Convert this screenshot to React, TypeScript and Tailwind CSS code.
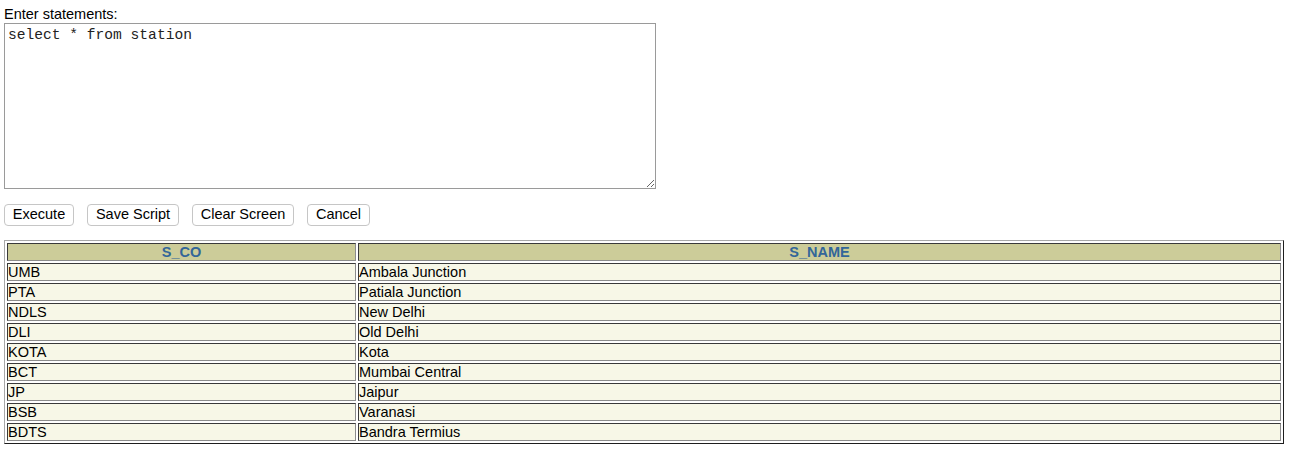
import React from "react";

const rows: [string, string][] = [
  ["UMB", "Ambala Junction"],
  ["PTA", "Patiala Junction"],
  ["NDLS", "New Delhi"],
  ["DLI", "Old Delhi"],
  ["KOTA", "Kota"],
  ["BCT", "Mumbai Central"],
  ["JP", "Jaipur"],
  ["BSB", "Varanasi"],
  ["BDTS", "Bandra Termius"],
];

const cell =
  "p-0 h-[18px] leading-[16px] border border-t-[#3a3a3a] border-l-[#3a3a3a] border-b-[#8c8c8c] border-r-[#8c8c8c]";

export default function App() {
  return (
    <div
      className="min-h-[451px] bg-white px-[4px] pt-[6px] text-black"
      style={{ fontFamily: '"Liberation Sans", Arial, sans-serif' }}
    >
      <div className="text-[14.5px] leading-[17px]">Enter statements:</div>
      <textarea
        defaultValue="select * from station"
        className="block w-[652px] h-[166px] border border-[#9a9a9a] bg-white px-[3px] py-[3px] text-[14.6px] leading-[16px] text-[#222] outline-none"
        style={{ fontFamily: '"Liberation Mono", "Courier New", monospace' }}
      />
      <div className="mt-[15px] flex gap-[13px]">
        {[
          ["Execute", "w-[70px]"],
          ["Save Script", "w-[92px]"],
          ["Clear Screen", "w-[102px]"],
          ["Cancel", "w-[63px]"],
        ].map(([label, w]) => (
          <button
            key={label}
            className={`${w} h-[22px] flex items-center justify-center rounded-[4px] border border-[#c6c6c6] bg-white pb-[2px] text-[14.5px] leading-[17px] text-black`}
          >
            {label}
          </button>
        ))}
      </div>
      <table
        className="mt-[14px] w-[1280px] border-separate border-spacing-[2px] border border-t-[#a8a8a8] border-l-[#a8a8a8] border-b-[#1e1e1e] border-r-[#1e1e1e] text-[14.5px]"
      >
        <thead>
          <tr>
            <th className={`${cell} w-[349px] bg-[#cccc99] text-center font-bold text-[#336699]`}>
              S_CO
            </th>
            <th className={`${cell} bg-[#cccc99] text-center font-bold text-[#336699]`}>
              S_NAME
            </th>
          </tr>
        </thead>
        <tbody>
          {rows.map(([code, name]) => (
            <tr key={code}>
              <td className={`${cell} bg-[#f7f7e7] text-left`}>{code}</td>
              <td className={`${cell} bg-[#f7f7e7] text-left`}>{name}</td>
            </tr>
          ))}
        </tbody>
      </table>
    </div>
  );
}
